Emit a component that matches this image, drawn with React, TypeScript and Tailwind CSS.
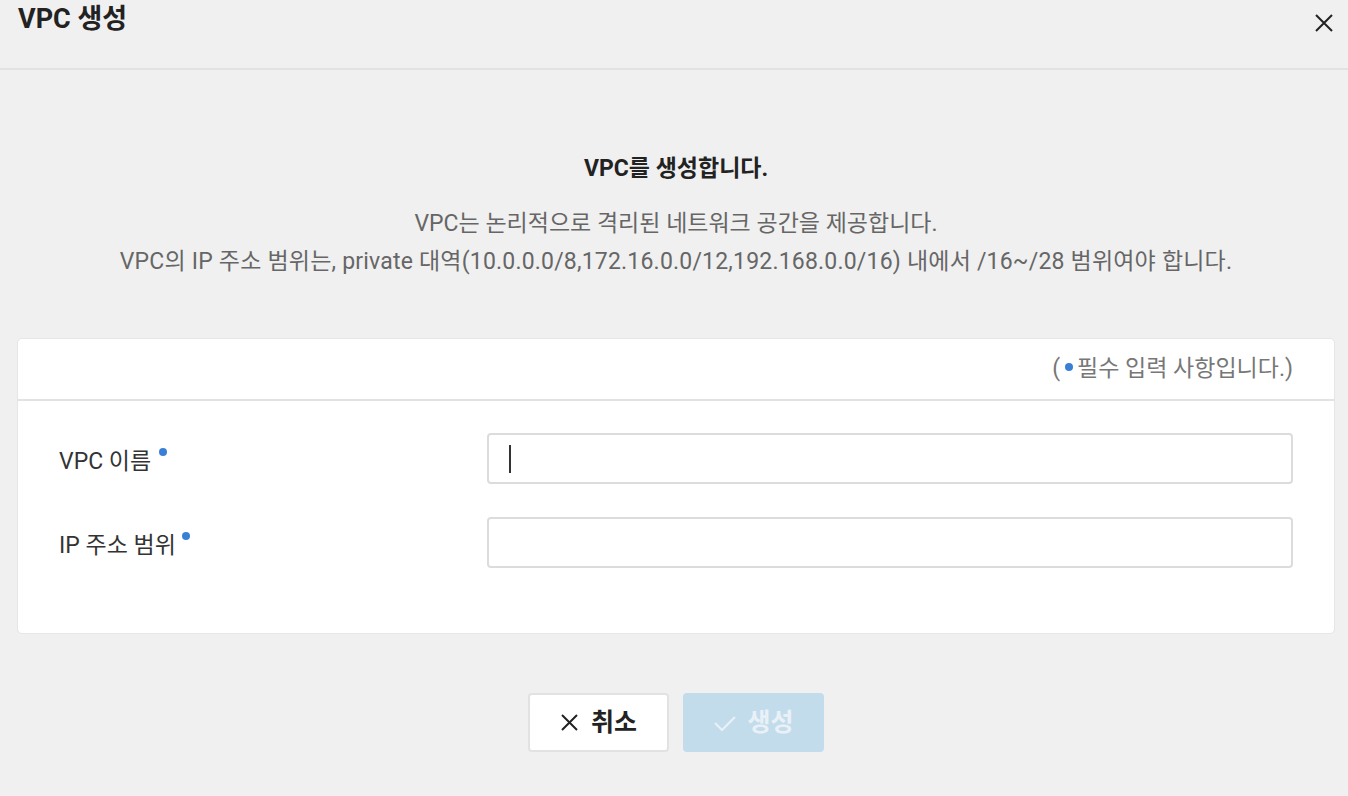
import React from "react";

const font = { fontFamily: 'Roboto, "Noto Sans CJK KR", sans-serif' };

function Dot({ cls }: { cls: string }) {
  return <span className={"inline-block w-[8px] h-[8px] rounded-full bg-[#3a7fd6] align-top " + cls} />;
}

export default function App() {
  return (
    <div className="w-[1348px] h-[796px] bg-[#f0f0f0] flex flex-col overflow-hidden" style={font}>
      <div className="h-[70px] border-b-2 border-[#e2e2e2] flex items-start justify-between pl-[18px] pr-[14px]">
        <h1 className="text-[27px] font-bold text-[#222] leading-[38px]">VPC 생성</h1>
        <svg width="20" height="20" viewBox="0 0 20 20" className="mt-[13px]" fill="none" stroke="#222" strokeWidth="2">
          <path d="M2 2 L18 18 M18 2 L2 18" />
        </svg>
      </div>

      <div className="flex flex-col items-center pt-[85px] pl-[4px]">
        <p className="text-[23px] font-bold text-[#222] leading-[28px]">VPC를 생성합니다.</p>
        <div className="mt-[22px] text-[23px] text-[#666] leading-[38px] text-center">
          <p>VPC는 논리적으로 격리된 네트워크 공간을 제공합니다.</p>
          <p className="tracking-[0.2px]">VPC의 IP 주소 범위는, private 대역(10.0.0.0/8,172.16.0.0/12,192.168.0.0/16) 내에서 /16~/28 범위여야 합니다.</p>
        </div>
      </div>

      <div className="ml-[17px] mr-[13px] mt-[57px] bg-white rounded-[5px] border border-[#e6e6e6]">
        <div className="h-[62px] border-b-2 border-[#e2e2e2] flex items-center justify-end pr-[41px]">
          <span className="text-[23px] text-[#777] leading-[30px]">
            (<Dot cls="mt-[9px] ml-[5px] mr-[4px]" />필수 입력 사항입니다.)
          </span>
        </div>
        <div className="px-[41px] pt-[32px] pb-[65px] flex flex-col gap-[33px]">
          <div className="flex items-center">
            <div className="w-[428px] text-[23px] text-[#333] leading-[30px] mt-[7px]">
              VPC 이름<Dot cls="mt-[1px] ml-[8px]" />
            </div>
            <div className="flex-1 h-[51px] rounded-[4px] border-2 border-[#dcdcdc] flex items-center pl-[20px]">
              <div className="w-[2px] h-[28px] bg-[#333]" />
            </div>
          </div>
          <div className="flex items-center">
            <div className="w-[428px] text-[23px] text-[#333] leading-[30px] mt-[7px]">
              IP 주소 범위<Dot cls="mt-[1px] ml-[6px]" />
            </div>
            <div className="flex-1 h-[51px] rounded-[4px] border-2 border-[#dcdcdc]" />
          </div>
        </div>
      </div>

      <div className="flex justify-center gap-[14px] mt-[59px] pl-[4px]">
        <button className="w-[141px] h-[59px] bg-white border-2 border-[#e2e2e2] rounded-[4px] flex items-center justify-center gap-[12px] text-[25px] font-bold text-[#222]">
          <svg width="19" height="19" viewBox="0 0 19 19" fill="none" stroke="#222" strokeWidth="2">
            <path d="M2 2 L17 17 M17 2 L2 17" />
          </svg>
          취소
        </button>
        <button className="w-[141px] h-[59px] bg-[#c2dcec] rounded-[4px] flex items-center justify-center gap-[10px] text-[25px] font-bold text-[#e9f1f7]">
          <svg width="24" height="18" viewBox="0 0 24 18" fill="none" stroke="#e9f1f7" strokeWidth="2">
            <path d="M2 9 L9 16 L22 3" />
          </svg>
          생성
        </button>
      </div>
    </div>
  );
}
